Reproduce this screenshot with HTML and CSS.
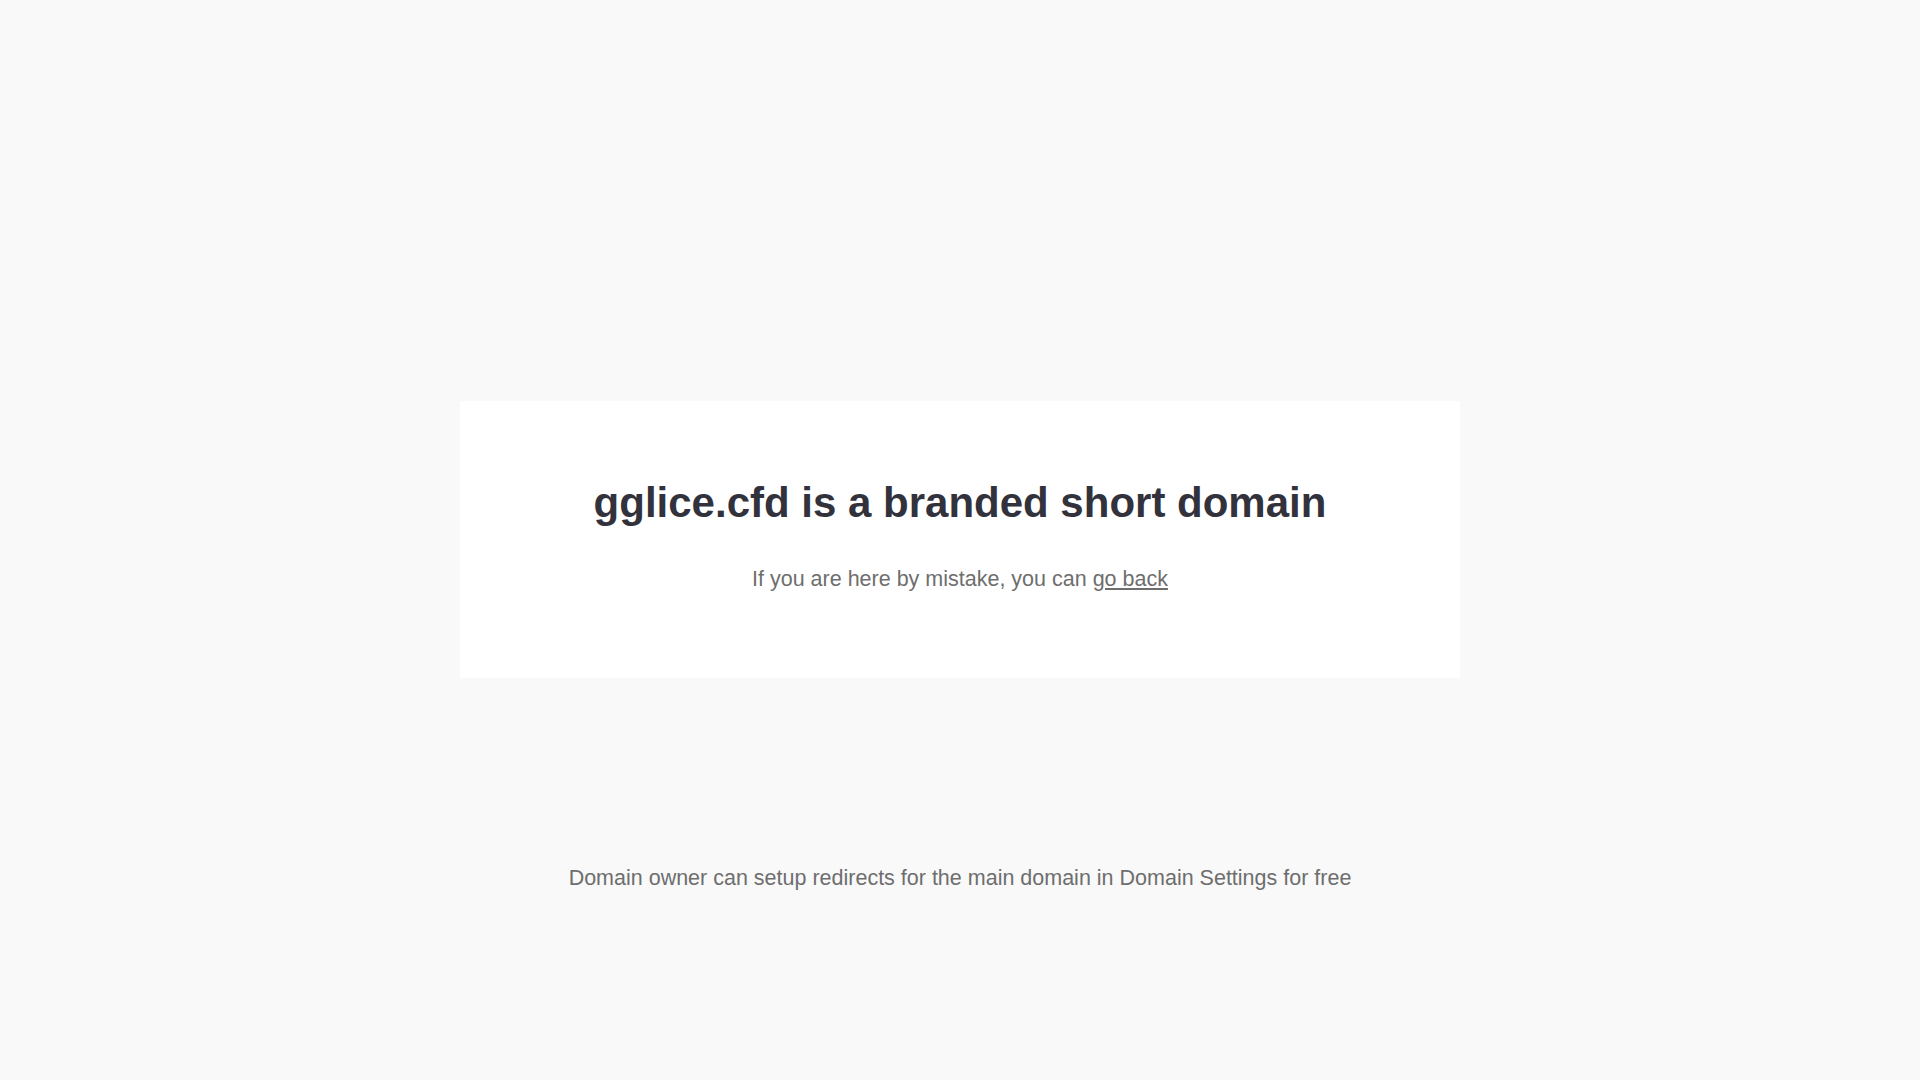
FILE: index.html
```html
<!DOCTYPE html>
<html lang="en">
<head>
<meta charset="utf-8">
<title>gglice.cfd</title>
<link rel="stylesheet" href="styles.css">
</head>
<body>
<main class="page">
  <section class="card">
    <h1 class="title">gglice.cfd is a branded short domain</h1>
    <p class="lead">If you are here by mistake, you can <a class="back" href="#">go back</a></p>
  </section>
  <p class="note">Domain owner can setup redirects for the main domain in Domain Settings for free</p>
</main>
</body>
</html>
```

FILE: styles.css
```css
html, body {
  margin: 0;
  padding: 0;
  background: #f9f9f9;
}
body {
  font-family: "Liberation Sans", Arial, sans-serif;
  min-height: 1080px;
}
.page {
  display: flex;
  flex-direction: column;
  align-items: center;
  padding-top: 401px;
}
.card {
  width: 1000px;
  box-sizing: border-box;
  background: #ffffff;
  padding: 78px 20px 87px;
  text-align: center;
}
.title {
  margin: 0;
  font-size: 42px;
  line-height: 48px;
  font-weight: 700;
  color: #32323c;
}
.lead {
  margin: 40px 0 0;
  font-size: 21.5px;
  line-height: 24px;
  color: #6e6e6e;
}
.back {
  color: #6e6e6e;
  text-decoration: underline;
}
.note {
  margin: 188px 0 0;
  font-size: 21.5px;
  line-height: 24px;
  color: #6e6e6e;
  text-align: center;
}
```
